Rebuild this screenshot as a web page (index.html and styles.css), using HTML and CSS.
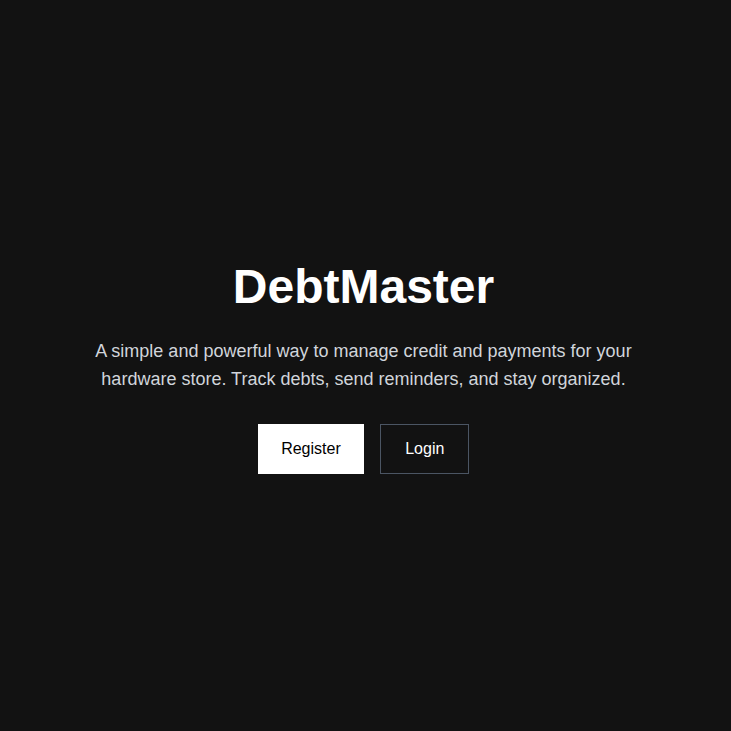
FILE: index.html
```html
<!DOCTYPE html>
<html lang="en">
<head>
<meta charset="utf-8">
<title>DebtMaster</title>
<link rel="stylesheet" href="styles.css">
</head>
<body>
<main class="hero">
  <div class="hero-content">
    <h1 class="title">DebtMaster</h1>
    <p class="lead">A simple and powerful way to manage credit and payments for your hardware store. Track debts, send reminders, and stay organized.</p>
    <div class="actions">
      <a class="btn btn-primary" href="#">Register</a>
      <a class="btn btn-outline" href="#">Login</a>
    </div>
  </div>
</main>
</body>
</html>
```

FILE: styles.css
```css
* { box-sizing: border-box; }
html, body { margin: 0; padding: 0; }
body {
  background: #121212;
  color: #ffffff;
  font-family: "Liberation Sans", Arial, sans-serif;
}
.hero {
  min-height: 100vh;
  padding-top: 6px;
  padding-right: 4px;
  display: flex;
  align-items: center;
  justify-content: center;
}
.hero-content {
  text-align: center;
  max-width: 576px;
  padding: 0 16px;
  box-sizing: content-box;
}
.title {
  margin: 0 0 26px;
  font-size: 48px;
  line-height: 48px;
  font-weight: 700;
  color: #ffffff;
}
.lead {
  margin: 0 0 31px;
  font-size: 18px;
  line-height: 28px;
  color: #d1d5db;
}
.actions {
  display: flex;
  justify-content: center;
  gap: 16px;
}
.btn {
  display: inline-block;
  padding: 12px 24px;
  font-size: 16px;
  line-height: 24px;
  text-decoration: none;
  border: 1px solid transparent;
}
.btn-primary {
  padding: 12px 22.5px;
  background: #ffffff;
  color: #000000;
  border-color: #ffffff;
}
.btn-outline {
  background: transparent;
  color: #ffffff;
  border-color: #4b5563;
}
```
